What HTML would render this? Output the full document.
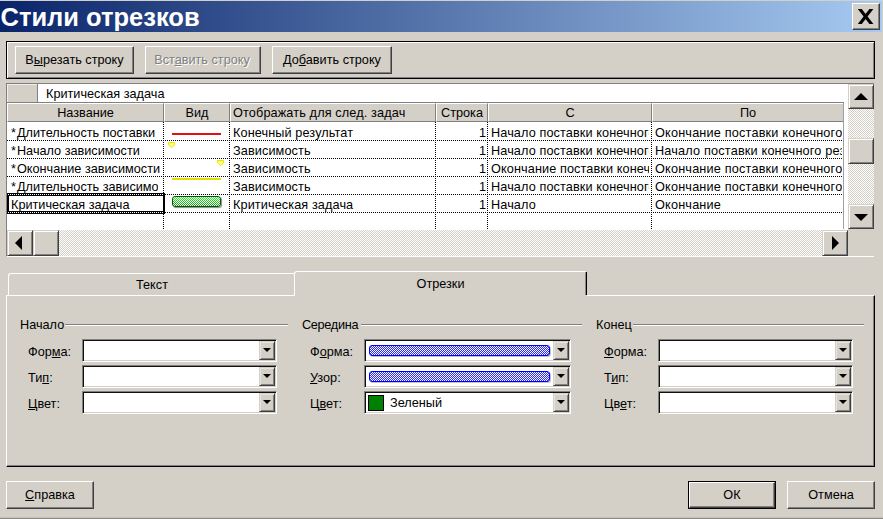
<!DOCTYPE html>
<html lang="ru"><head><meta charset="utf-8"><title>Стили отрезков</title>
<style>
html,body{margin:0;padding:0}
body{width:883px;height:519px;overflow:hidden;background:#d4d0c8;position:relative;font-family:"Liberation Sans","DejaVu Sans",sans-serif;font-size:12.7px;color:#000;line-height:16px}
.a{position:absolute;box-sizing:border-box;white-space:nowrap}
.title{left:0;top:1px;width:882px;height:31px;background:linear-gradient(90deg,#0a246a 0%,#a6caf0 100%)}
.title .t{left:0.5px;top:1px;color:#fff;font-weight:bold;font-size:25.5px;line-height:30px}
.btn{background:#d4d0c8;border:1px solid;border-color:#fff #404040 #404040 #fff;box-shadow:inset -1px -1px 0 #808080;text-align:center}
u{text-decoration:underline;text-underline-offset:1px}
.sb{background:#d4d0c8;border:1px solid;border-color:#d4d0c8 #404040 #404040 #d4d0c8;box-shadow:inset 1px 1px 0 #fff,inset -1px -1px 0 #808080}
.cb{background:#d4d0c8;border:1px solid;border-color:#d4d0c8 #404040 #404040 #d4d0c8;box-shadow:inset 1px 1px 0 #e6e4df,inset -1px -1px 0 #808080}
.dis{color:#808080;text-shadow:1px 1px 0 #fff}
.sunk{border:1px solid;border-color:#808080 #fff #fff #808080;box-shadow:inset 1px 1px 0 #101010,inset -1px -1px 0 #d4d0c8;background:#fff}
.hdr{background:#d4d0c8;border:1px solid;border-color:#fff #808080 #808080 #fff;text-align:center;height:19px;top:103px;line-height:19px}
.cell{height:16px;line-height:16px;overflow:hidden;letter-spacing:0.1px}
.chk{background-image:conic-gradient(#fff 25%,#d4d0c8 0 50%,#fff 0 75%,#d4d0c8 0);background-size:2px 2px}
.hl{height:1px;background-image:linear-gradient(90deg,#000 50%,#fff 0);background-size:2px 1px}
.wd{height:1px;background-image:linear-gradient(90deg,#fff 50%,#000 0);background-size:2px 1px}
.vl{width:1px;background-image:linear-gradient(180deg,#000 50%,#fff 0);background-size:1px 2px}
.bar{border:1px solid #0000ff;border-radius:3px;box-shadow:1px 1px 0 #c8c4b4;background-color:#fff;background-image:conic-gradient(#2828ff 25%,#fff 0 50%,#2828ff 0 75%,#fff 0);background-size:2px 2px}
.lbl{line-height:16px}
.grp{line-height:16px}
.gl{height:2px;border-top:1px solid #808080;border-bottom:1px solid #fff}
</style></head><body>
<!-- title bar -->
<div class="a title"><div class="a t">Стили отрезков</div></div>
<div class="a btn" style="left:852px;top:3px;width:28px;height:27px"></div>
<svg class="a" style="left:857px;top:8px" width="18" height="17" viewBox="0 0 18 17"><path d="M.8 1H4.8L16.4 16H12.4Z" fill="#000"/><path d="M16.4 1H12.4L.8 16H4.8Z" fill="#000"/></svg>
<!-- toolbar -->
<div class="a" style="left:6px;top:41px;width:869px;height:38px;border:1px solid #000;box-shadow:inset 1px 1px 0 #fff, inset -1px -1px 0 #808080"></div>
<div class="a btn" style="left:15px;top:46px;width:119px;height:28px;line-height:26px">В<u>ы</u>резать строку</div>
<div class="a btn dis" style="left:145px;top:46px;width:116px;height:28px;line-height:26px;padding-right:2px">Вст<u>а</u>вить строку</div>
<div class="a btn" style="left:272px;top:46px;width:120px;height:28px;line-height:26px">До<u>б</u>авить строку</div>
<!-- grid -->
<div class="a" style="left:6px;top:83px;width:868px;height:174px;background:#fff;border:1px solid;border-color:#808080 #fff #fff #808080;border-right:none"></div>
<div class="a" style="left:7px;top:84px;width:31px;height:18px;background:#d4d0c8;border-right:1px solid #808080;box-shadow:inset 1px 1px 0 #f0efec"></div>
<div class="a" style="left:46px;top:86px">Критическая задача</div>
<div class="a" style="left:7px;top:102px;width:837px;height:1px;background:#808080"></div>
<div class="a hdr" style="left:7px;width:157px">Название</div>
<div class="a hdr" style="left:164px;width:66px">Вид</div>
<div class="a hdr" style="left:230px;width:206px;text-align:left;padding-left:2px;letter-spacing:0.13px">Отображать для след. задач</div>
<div class="a hdr" style="left:436px;width:52px">Строка</div>
<div class="a hdr" style="left:488px;width:164px">С</div>
<div class="a hdr" style="left:652px;width:192px">По</div>
<div class="a cell" style="left:11px;top:125px;width:150px;letter-spacing:0"><span style="margin-right:1px">*</span>Длительность поставки</div>
<div class="a cell" style="left:233px;top:125px;width:201px">Конечный результат</div>
<div class="a cell" style="left:437px;top:125px;width:49px;text-align:right;letter-spacing:0">1</div>
<div class="a cell" style="left:491px;top:125px;width:158px">Начало поставки конечного результата</div>
<div class="a cell" style="left:655px;top:125px;width:187px;letter-spacing:0.18px">Окончание поставки конечного результата</div>
<div class="a cell" style="left:11px;top:143px;width:150px;letter-spacing:0"><span style="margin-right:1px">*</span>Начало зависимости</div>
<div class="a cell" style="left:233px;top:143px;width:201px">Зависимость</div>
<div class="a cell" style="left:437px;top:143px;width:49px;text-align:right;letter-spacing:0">1</div>
<div class="a cell" style="left:491px;top:143px;width:158px">Начало поставки конечного результата</div>
<div class="a cell" style="left:655px;top:143px;width:187px;letter-spacing:0.18px">Начало поставки конечного результата</div>
<div class="a cell" style="left:11px;top:161px;width:150px;letter-spacing:0"><span style="margin-right:1px">*</span>Окончание зависимости</div>
<div class="a cell" style="left:233px;top:161px;width:201px">Зависимость</div>
<div class="a cell" style="left:437px;top:161px;width:49px;text-align:right;letter-spacing:0">1</div>
<div class="a cell" style="left:491px;top:161px;width:158px">Окончание поставки конечного результата</div>
<div class="a cell" style="left:655px;top:161px;width:187px;letter-spacing:0.18px">Окончание поставки конечного результата</div>
<div class="a cell" style="left:11px;top:179px;width:147px;letter-spacing:0"><span style="margin-right:1px">*</span>Длительность зависимости</div>
<div class="a cell" style="left:233px;top:179px;width:201px">Зависимость</div>
<div class="a cell" style="left:437px;top:179px;width:49px;text-align:right;letter-spacing:0">1</div>
<div class="a cell" style="left:491px;top:179px;width:158px">Начало поставки конечного результата</div>
<div class="a cell" style="left:655px;top:179px;width:187px;letter-spacing:0.18px">Окончание поставки конечного результата</div>
<div class="a cell" style="left:11px;top:197px;width:150px;letter-spacing:0">Критическая задача</div>
<div class="a cell" style="left:233px;top:197px;width:201px">Критическая задача</div>
<div class="a cell" style="left:437px;top:197px;width:49px;text-align:right;letter-spacing:0">1</div>
<div class="a cell" style="left:491px;top:197px;width:158px">Начало</div>
<div class="a cell" style="left:655px;top:197px;width:187px;letter-spacing:0.18px">Окончание</div>
<div class="a hl" style="left:7px;top:140px;width:837px"></div>
<div class="a hl" style="left:7px;top:158px;width:837px"></div>
<div class="a hl" style="left:7px;top:176px;width:837px"></div>
<div class="a hl" style="left:7px;top:194px;width:837px"></div>
<div class="a hl" style="left:7px;top:212px;width:837px"></div>
<div class="a" style="left:843px;top:103px;width:1px;height:126px;background:#a0a0a0"></div>
<div class="a vl" style="left:163px;top:122px;height:107px"></div>
<div class="a vl" style="left:229px;top:122px;height:107px"></div>
<div class="a vl" style="left:435px;top:122px;height:107px"></div>
<div class="a vl" style="left:487px;top:122px;height:107px"></div>
<div class="a vl" style="left:651px;top:122px;height:107px"></div>
<div class="a" style="left:7px;top:193px;width:158px;height:21px;border:solid #000;border-width:3px 2px"></div>
<div class="a wd" style="left:8px;top:194px;width:156px"></div>
<div class="a wd" style="left:8px;top:212px;width:156px"></div>
<div class="a" style="left:172px;top:133px;width:49px;height:2px;background:#e01010"></div>
<svg class="a" style="left:168px;top:142px" width="8" height="7" viewBox="0 0 8 7"><path d="M.5 .5H6.5V2.8L3.5 5.8L.5 2.8Z" fill="#ffff80" stroke="#e4e400" stroke-width="1"/></svg>
<svg class="a" style="left:217px;top:160px" width="8" height="7" viewBox="0 0 8 7"><path d="M.5 .5H6.5V2.8L3.5 5.8L.5 2.8Z" fill="#ffff80" stroke="#e4e400" stroke-width="1"/></svg>
<div class="a" style="left:172px;top:178px;width:49px;height:2px;background:#e0e000"></div>
<div class="a" style="left:172px;top:196px;width:49px;height:11px;border:1px solid #005800;border-radius:3px;background:conic-gradient(#fff 25%,transparent 0 50%,#fff 0 75%,transparent 0) 0 0/2px 2px,linear-gradient(180deg,#38ff38,#0c980c);box-shadow:1px 1px 1px #8c8c8c"></div>
<div class="a chk" style="left:848px;top:84px;width:26px;height:145px"></div>
<div class="a sb" style="left:848px;top:84px;width:26px;height:25px"></div>
<svg class="a" style="left:854px;top:93px" width="14" height="7" viewBox="0 0 12 7" preserveAspectRatio="none"><path d="M0 7H12L6 0Z" fill="#000"/></svg>
<div class="a sb" style="left:848px;top:138px;width:26px;height:26px"></div>
<div class="a sb" style="left:848px;top:204px;width:26px;height:25px"></div>
<svg class="a" style="left:854px;top:214px" width="14" height="7" viewBox="0 0 12 7" preserveAspectRatio="none"><path d="M0 0H12L6 7Z" fill="#000"/></svg>
<div class="a chk" style="left:7px;top:230px;width:841px;height:26px"></div>
<div class="a sb" style="left:7px;top:230px;width:26px;height:26px"></div>
<svg class="a" style="left:15px;top:236px" width="7" height="14" viewBox="0 0 7 12" preserveAspectRatio="none"><path d="M7 0V12L0 6Z" fill="#000"/></svg>
<div class="a sb" style="left:33px;top:230px;width:26px;height:26px"></div>
<div class="a sb" style="left:822px;top:230px;width:26px;height:26px"></div>
<svg class="a" style="left:832px;top:236px" width="7" height="14" viewBox="0 0 7 12" preserveAspectRatio="none"><path d="M0 0V12L7 6Z" fill="#000"/></svg>
<div class="a" style="left:848px;top:229px;width:26px;height:27px;background:#d4d0c8"></div>
<!-- tabs -->
<div class="a" style="left:6px;top:295px;width:869px;height:172px;border:1px solid;border-color:#fff #000 #000 #fff;box-shadow:inset -1px -1px 0 #808080"></div>
<div class="a" style="left:8px;top:273px;width:287px;height:22px;border:1px solid #fff;border-bottom:none;border-right:none;border-radius:3px 0 0 0;text-align:center;line-height:23px">Текст</div>
<div class="a" style="left:294px;top:271px;width:293px;height:25px;background:#d4d0c8;border:1px solid;border-color:#fff transparent transparent #fff;border-bottom:none;border-radius:3px 3px 0 0;text-align:center;line-height:24px">Отрезки</div>
<div class="a" style="left:585px;top:272px;width:2px;height:23px;background:linear-gradient(90deg,rgba(0,0,0,.35) 50%,#000 50%)"></div>
<div class="a grp" style="left:20px;top:317px">Начало</div>
<div class="a gl" style="left:65px;top:324px;width:223px"></div>
<div class="a grp" style="left:302px;top:317px;letter-spacing:-0.3px">Середина</div>
<div class="a gl" style="left:361px;top:324px;width:221px"></div>
<div class="a grp" style="left:596px;top:317px">Конец</div>
<div class="a gl" style="left:633px;top:324px;width:231px"></div>
<div class="a lbl" style="left:28px;top:344px">Фор<u>м</u>а:</div>
<div class="a sunk" style="left:82px;top:339px;width:195px;height:23px"></div>
<div class="a cb" style="left:259px;top:341px;width:16px;height:19px"></div>
<svg class="a" style="left:263px;top:348px" width="8" height="4" viewBox="0 0 8 4"><path d="M0 0H8L4 4Z" fill="#000"/></svg>
<div class="a lbl" style="left:310px;top:344px">Ф<u>о</u>рма:</div>
<div class="a sunk" style="left:364px;top:339px;width:207px;height:23px"><div class="a bar" style="left:4px;top:5px;width:181px;height:11px"></div></div>
<div class="a cb" style="left:553px;top:341px;width:16px;height:19px"></div>
<svg class="a" style="left:557px;top:348px" width="8" height="4" viewBox="0 0 8 4"><path d="M0 0H8L4 4Z" fill="#000"/></svg>
<div class="a lbl" style="left:604px;top:344px"><u>Ф</u>орма:</div>
<div class="a sunk" style="left:658px;top:339px;width:195px;height:23px"></div>
<div class="a cb" style="left:835px;top:341px;width:16px;height:19px"></div>
<svg class="a" style="left:839px;top:348px" width="8" height="4" viewBox="0 0 8 4"><path d="M0 0H8L4 4Z" fill="#000"/></svg>
<div class="a lbl" style="left:28px;top:370px">Ти<u>п</u>:</div>
<div class="a sunk" style="left:82px;top:365px;width:195px;height:23px"></div>
<div class="a cb" style="left:259px;top:367px;width:16px;height:19px"></div>
<svg class="a" style="left:263px;top:374px" width="8" height="4" viewBox="0 0 8 4"><path d="M0 0H8L4 4Z" fill="#000"/></svg>
<div class="a lbl" style="left:310px;top:370px"><u>У</u>зор:</div>
<div class="a sunk" style="left:364px;top:365px;width:207px;height:23px"><div class="a bar" style="left:4px;top:5px;width:181px;height:11px"></div></div>
<div class="a cb" style="left:553px;top:367px;width:16px;height:19px"></div>
<svg class="a" style="left:557px;top:374px" width="8" height="4" viewBox="0 0 8 4"><path d="M0 0H8L4 4Z" fill="#000"/></svg>
<div class="a lbl" style="left:604px;top:370px">Т<u>и</u>п:</div>
<div class="a sunk" style="left:658px;top:365px;width:195px;height:23px"></div>
<div class="a cb" style="left:835px;top:367px;width:16px;height:19px"></div>
<svg class="a" style="left:839px;top:374px" width="8" height="4" viewBox="0 0 8 4"><path d="M0 0H8L4 4Z" fill="#000"/></svg>
<div class="a lbl" style="left:28px;top:396px"><u>Ц</u>вет:</div>
<div class="a sunk" style="left:82px;top:391px;width:195px;height:23px"></div>
<div class="a cb" style="left:259px;top:393px;width:16px;height:19px"></div>
<svg class="a" style="left:263px;top:400px" width="8" height="4" viewBox="0 0 8 4"><path d="M0 0H8L4 4Z" fill="#000"/></svg>
<div class="a lbl" style="left:310px;top:396px">Ц<u>в</u>ет:</div>
<div class="a sunk" style="left:364px;top:391px;width:207px;height:23px"><div class="a" style="left:3px;top:3px;width:16px;height:16px;background:#008000;border:1px solid #000"></div><div class="a" style="left:25px;top:3px">Зеленый</div></div>
<div class="a cb" style="left:553px;top:393px;width:16px;height:19px"></div>
<svg class="a" style="left:557px;top:400px" width="8" height="4" viewBox="0 0 8 4"><path d="M0 0H8L4 4Z" fill="#000"/></svg>
<div class="a lbl" style="left:604px;top:396px">Цв<u>е</u>т:</div>
<div class="a sunk" style="left:658px;top:391px;width:195px;height:23px"></div>
<div class="a cb" style="left:835px;top:393px;width:16px;height:19px"></div>
<svg class="a" style="left:839px;top:400px" width="8" height="4" viewBox="0 0 8 4"><path d="M0 0H8L4 4Z" fill="#000"/></svg>
<!-- bottom buttons -->
<div class="a btn" style="left:6px;top:481px;width:88px;height:28px;line-height:27px"><u>С</u>правка</div>
<div class="a" style="left:688px;top:481px;width:88px;height:28px;border:1px solid #000"></div>
<div class="a btn" style="left:689px;top:482px;width:86px;height:26px;line-height:25px">ОК</div>
<div class="a btn" style="left:787px;top:481px;width:88px;height:28px;line-height:27px">Отмена</div>
<div class="a" style="left:0;top:517px;width:883px;height:2px;background:linear-gradient(180deg,#c6c2ba 50%,#8c8b88 50%)"></div>
</body></html>
